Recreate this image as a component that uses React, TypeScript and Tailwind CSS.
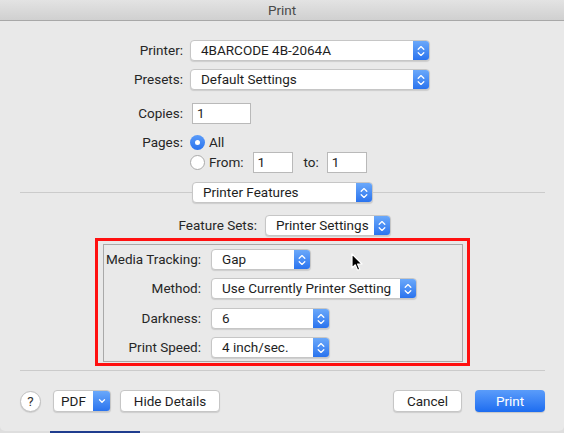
import React from "react";

const font = { fontFamily: "Roboto, 'Noto Sans', 'Liberation Sans', sans-serif" };

function Stepper() {
  return (
    <div className="w-[16px] h-full bg-gradient-to-b from-[#6aa8fa] to-[#2a73ee] flex items-center justify-center shrink-0">
      <svg width="8" height="12" viewBox="0 0 8 12" fill="none">
        <path d="M1.2 4.2 L4 1.6 L6.8 4.2" stroke="white" strokeWidth="1.3" strokeLinecap="round" strokeLinejoin="round" />
        <path d="M1.2 7.8 L4 10.4 L6.8 7.8" stroke="white" strokeWidth="1.3" strokeLinecap="round" strokeLinejoin="round" />
      </svg>
    </div>
  );
}

function Popup({ text, w }: { text: string; w: string }) {
  return (
    <div className={`${w} h-[21px] flex rounded-[4px] bg-white border border-[#c6c6c6] shadow-[0_1px_1px_rgba(0,0,0,0.12)] overflow-hidden shrink-0`}>
      <span className="flex-1 pl-[10px] text-[13.5px] leading-[19px] text-[#1e1e1e] whitespace-nowrap overflow-hidden">{text}</span>
      <Stepper />
    </div>
  );
}

function Field({ value, w }: { value: string; w: string }) {
  return (
    <div className={`${w} h-[21px] bg-white border border-[#b9b9b9] pl-[4px] text-[13.5px] leading-[19px] text-[#1e1e1e] shrink-0`}>{value}</div>
  );
}

function Radio({ on }: { on: boolean }) {
  return on ? (
    <div className="w-[15px] h-[15px] rounded-full bg-gradient-to-b from-[#5a9bf9] to-[#2a73ee] flex items-center justify-center shrink-0">
      <div className="w-[5px] h-[5px] rounded-full bg-white" />
    </div>
  ) : (
    <div className="w-[15px] h-[15px] rounded-full bg-white border border-[#a9a9a9] shrink-0" />
  );
}

function Btn({ children, w }: { children: React.ReactNode; w: string }) {
  return (
    <div className={`${w} h-[22px] rounded-[4px] bg-white border border-[#c6c6c6] shadow-[0_1px_1px_rgba(0,0,0,0.12)] flex items-center justify-center text-[13.5px] text-[#1e1e1e]`}>
      {children}
    </div>
  );
}

const lbl = "text-right text-[13.5px] text-[#262626] whitespace-nowrap";

export default function App() {
  return (
    <div className="w-[564px] h-[433px] bg-[#dedede] overflow-hidden relative" style={font}>
      <div className="w-[564px] h-[431px] bg-[#e9e9e9] rounded-b-[5px] flex flex-col">
        {/* title bar */}
        <div className="h-[21px] bg-gradient-to-b from-[#e3e3e3] to-[#d0d0d0] border-b border-[#a8a8a8] flex items-center justify-center text-[13.5px] text-[#4a4a4a]">
          Print
        </div>

        {/* Printer */}
        <div className="flex items-center mt-[19px]">
          <div className={`w-[183px] ${lbl}`}>Printer:</div>
          <div className="ml-[7px]"><Popup text="4BARCODE 4B-2064A" w="w-[240px]" /></div>
        </div>
        <div className="flex items-center mt-[8px]">
          <div className={`w-[183px] ${lbl}`}>Presets:</div>
          <div className="ml-[7px]"><Popup text="Default Settings" w="w-[240px]" /></div>
        </div>
        <div className="flex items-center mt-[13px]">
          <div className={`w-[183px] ${lbl}`}>Copies:</div>
          <div className="ml-[9px]"><Field value="1" w="w-[59px]" /></div>
        </div>
        <div className="flex items-center mt-[9px] h-[18px]">
          <div className={`w-[183px] ${lbl}`}>Pages:</div>
          <div className="ml-[7px] flex items-center gap-[4px]">
            <Radio on={true} />
            <span className="text-[13.5px] text-[#262626]">All</span>
          </div>
        </div>
        <div className="flex items-center mt-[1px]">
          <div className="w-[183px]" />
          <div className="ml-[7px] flex items-center">
            <Radio on={false} />
            <span className="ml-[4px] text-[13.5px] text-[#262626]">From:</span>
            <div className="ml-[9px]"><Field value="1" w="w-[40px]" /></div>
            <span className="ml-[11px] text-[13.5px] text-[#262626]">to:</span>
            <div className="ml-[8px]"><Field value="1" w="w-[40px]" /></div>
          </div>
        </div>

        {/* separator with Printer Features */}
        <div className="flex items-center mt-[9px] ml-[20px] w-[525px]">
          <div className="w-[172px] h-px bg-[#cbcbcb]" />
          <Popup text="Printer Features" w="w-[181px]" />
          <div className="flex-1 h-px bg-[#cbcbcb]" />
        </div>

        {/* Feature Sets */}
        <div className="flex items-center mt-[12px]">
          <div className={`w-[257px] ${lbl}`}>Feature Sets:</div>
          <div className="ml-[8px]"><Popup text="Printer Settings" w="w-[126px]" /></div>
        </div>

        {/* red box */}
        <div className="ml-[95px] mt-[2px] w-[375px] h-[128px] border-[3px] border-[#ff1010] pl-[5px] pt-[3px]">
          <div className="w-[360px] h-[118px] border border-[#a9a9a9] flex flex-col pt-[4px] relative">
            {[
              ["Media Tracking:", "Gap", "w-[100px]"],
              ["Method:", "Use Currently Printer Setting", "w-[206px]"],
              ["Darkness:", "6", "w-[119px]"],
              ["Print Speed:", "4 inch/sec.", "w-[119px]"],
            ].map(([l, v, w], i) => (
              <div key={l} className={`flex items-center ${i === 0 ? "" : i === 2 ? "mt-[9px]" : "mt-[8px]"}`}>
                <div className={`w-[97px] ${lbl}`}>{l}</div>
                <div className="ml-[10px]"><Popup text={v} w={w} /></div>
              </div>
            ))}
            {/* cursor */}
            <svg className="absolute left-[247px] top-[8px]" width="13" height="19" viewBox="0 0 13 19">
              <path d="M1 1 L1 15 L4.3 11.8 L6.6 17.2 L8.8 16.3 L6.6 11 L11 11 Z" fill="black" stroke="white" strokeWidth="1.2" strokeLinejoin="round" />
            </svg>
          </div>
        </div>

        {/* bottom separator */}
        <div className="ml-[20px] w-[525px] h-px bg-[#cbcbcb] mt-[4px]" />

        {/* bottom buttons */}
        <div className="flex items-center mt-[19px] pl-[20px] pr-[19px]">
          <div className="w-[21px] h-[21px] rounded-full bg-white border border-[#c0c0c0] shadow-[0_1px_1px_rgba(0,0,0,0.12)] flex items-center justify-center text-[13.5px] text-[#333]">?</div>
          <div className="ml-[12px] w-[58px] h-[22px] rounded-[4px] bg-white border border-[#c6c6c6] shadow-[0_1px_1px_rgba(0,0,0,0.12)] flex overflow-hidden">
            <span className="flex-1 text-center text-[13.5px] leading-[20px] text-[#1e1e1e]">PDF</span>
            <div className="w-[17px] h-full bg-gradient-to-b from-[#6aa8fa] to-[#2a73ee] flex items-center justify-center">
              <svg width="8" height="6" viewBox="0 0 8 6" fill="none">
                <path d="M1.5 1.8 L4 4.2 L6.5 1.8" stroke="white" strokeWidth="1.3" strokeLinecap="round" strokeLinejoin="round" />
              </svg>
            </div>
          </div>
          <div className="ml-[9px]"><Btn w="w-[100px]">Hide Details</Btn></div>
          <div className="flex-1" />
          <Btn w="w-[69px]">Cancel</Btn>
          <div className="ml-[13px] w-[70px] h-[22px] rounded-[4px] bg-gradient-to-b from-[#5a9cfa] to-[#1c6cf0] shadow-[0_1px_1px_rgba(0,0,0,0.15)] flex items-center justify-center text-[13.5px] text-white">
            Print
          </div>
        </div>
      </div>
      <div className="absolute left-[50px] top-[431px] w-[90px] h-[2px] bg-[#1f3c8e]" />
    </div>
  );
}
